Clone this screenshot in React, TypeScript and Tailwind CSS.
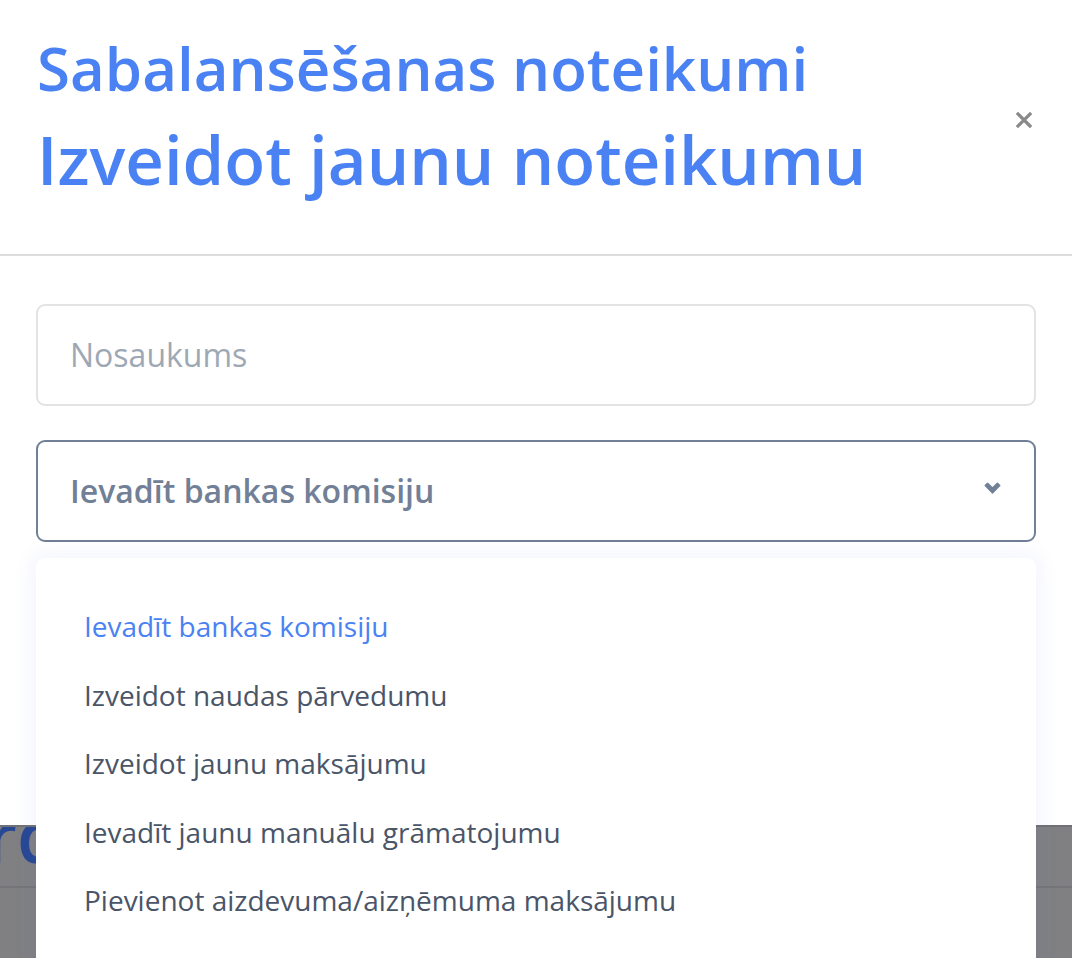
import React from "react";

const font = { fontFamily: '"Open Sans", "Noto Sans", sans-serif' };

export default function App() {
  const items = [
    "Ievadīt bankas komisiju",
    "Izveidot naudas pārvedumu",
    "Izveidot jaunu maksājumu",
    "Ievadīt jaunu manuālu grāmatojumu",
    "Pievienot aizdevuma/aizņēmuma maksājumu",
  ];
  return (
    <div
      className="relative w-[1072px] h-[958px] overflow-hidden bg-[#808083]"
      style={font}
    >
      {/* modal */}
      <div className="bg-white h-[825px]">
        <div className="flex justify-between items-start pl-[37px] pr-[40px] pt-[23px] pb-[49px] border-b-2 border-[#dddddd]">
          <div className="font-semibold text-[#4a82f4]">
            <h2 className="text-[60px] leading-[90px]">Sabalansēšanas noteikumi</h2>
            <h1 className="text-[67px] leading-[92px]">Izveidot jaunu noteikumu</h1>
          </div>
          <button className="mt-[89px] w-[16px] h-[16px]">
            <svg width="16" height="16" viewBox="0 0 16 16">
              <path d="M2 2 L14 14 M14 2 L2 14" stroke="#8a8a8a" strokeWidth="3.2" strokeLinecap="square" />
            </svg>
          </button>
        </div>
        <div className="px-[36px] pt-[48px] flex flex-col gap-[34px]">
          <div className="h-[102px] border-2 border-[#e3e3e3] rounded-[9px] px-[32px] flex items-center">
            <span className="text-[32px] text-[#9ea8b5]">Nosaukums</span>
          </div>
          <div className="h-[102px] border-2 border-[#718096] rounded-[9px] pl-[32px] pr-[33px] flex items-center justify-between">
            <span className="text-[32px] font-semibold text-[#718096]">Ievadīt bankas komisiju</span>
            <svg width="17" height="12" viewBox="0 0 17 12" className="mt-[-6px]">
              <polygon
                points="1.2,3.6 3.6,1.2 8.5,6.1 13.4,1.2 15.8,3.6 8.5,10.9"
                fill="#718096"
                stroke="#718096"
                strokeWidth="1.4"
                strokeLinejoin="round"
              />
            </svg>
          </div>
        </div>
      </div>
      <div className="h-[2px] bg-[#707174]" />
      {/* background page behind overlay */}
      <div className="h-[59px] overflow-hidden">
        <div className="-mt-[42px] -ml-[14px] text-[72px] font-semibold leading-[100px] text-[#284894]">rd</div>
      </div>
      <div className="h-[2px] bg-[#747578]" />

      {/* dropdown menu */}
      <div className="absolute left-[36px] top-[558px] w-[1000px] h-[440px] bg-white rounded-[9px] shadow-[0_0_18px_6px_rgba(90,100,220,0.06)] pt-[34px] pl-[48px]">
        {items.map((t, i) => (
          <div
            key={t}
            className={`text-[28px] leading-[68.5px] ${i === 0 ? "text-[#4a82f4]" : "text-[#4a5568]"}`}
          >
            {t}
          </div>
        ))}
      </div>
    </div>
  );
}
